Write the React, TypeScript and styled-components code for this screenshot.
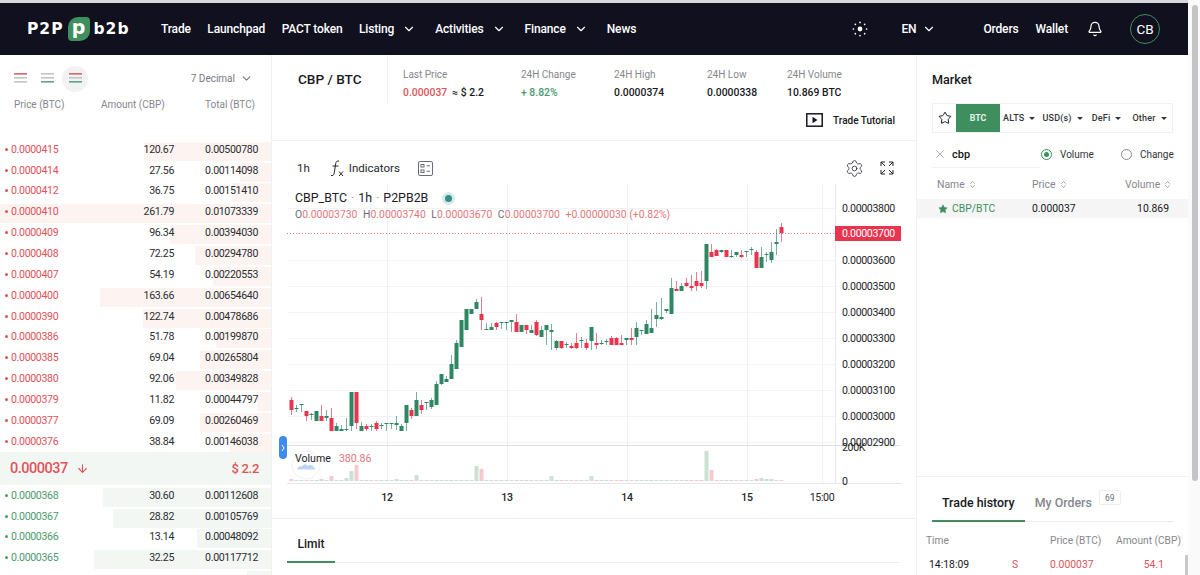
import React from 'react';
import styled, { createGlobalStyle } from 'styled-components';
import { ArrowDown, Bell, ChevronDown, ChevronsUpDown, Settings, Star, X } from 'lucide-react';

const RED = '#e0535a';
const GREEN = '#4c9a70';
const BRAND = '#3f8f5e';
const LINE = '#f1f1f3';

const GlobalStyle = createGlobalStyle`
  html, body { margin: 0; padding: 0; background: #fff; overflow: hidden; }
  body { font-family: Roboto, "Liberation Sans", sans-serif; color: #17181c; }
  * { box-sizing: border-box; }
`;

const Page = styled.div`
  display: flex;
  width: 1200px;
  height: 575px;
  overflow: hidden;
`;

const Main = styled.div`
  width: 1188px;
  border-top: 3px solid #d8d8da;
  display: flex;
  flex-direction: column;
`;

const ScrollTrack = styled.div`
  width: 12px;
  padding: 5px 2px 0 4px;
  background: #fafafa;
`;

const ScrollThumb = styled.div`
  height: 476px;
  border-radius: 3px;
  background: #c4c4c6;
`;

// top bar
const Header = styled.header`
  height: 52px;
  flex: none;
  background: #10101f;
  color: #fff;
  display: flex;
  align-items: center;
  padding-left: 27px;
  font-size: 12px;
  letter-spacing: -0.15px;
  font-weight: 500;
`;

const Logo = styled.div`
  width: 134px;
  display: flex;
  align-items: center;
  font-family: "DejaVu Sans", sans-serif;
  font-weight: 700;
  font-size: 15.5px;
  letter-spacing: 1px;
`;

const LogoMark = styled.span`
  width: 22px;
  height: 24px;
  margin: 0 4px 0 4px;
  border-radius: 10px 4px 10px 4px;
  background: ${BRAND};
  color: #fff;
  display: flex;
  align-items: center;
  justify-content: center;
  font-size: 19px;
  letter-spacing: 0;
  line-height: 1;
  padding-bottom: 3px;
`;

const Nav = styled.nav`
  display: flex;
  align-items: center;
  gap: 16.5px;
  flex: 1;
`;

const NavItem = styled.span`
  display: flex;
  align-items: center;
  gap: 8px;
  white-space: nowrap;
  padding-right: ${p => (p.$caret ? 2.5 : 0)}px;
`;

const HeaderRight = styled.div`
  display: flex;
  align-items: center;
  padding-right: 28px;
`;

const Lang = styled.span`
  display: flex;
  align-items: center;
  gap: 6px;
  margin: 0 47px 0 33px;
`;

const HeaderLink = styled.span`
  margin-right: 17px;
`;

const BellWrap = styled.span`
  display: flex;
  margin: 0 27px 0 2px;
`;

const Avatar = styled.span`
  width: 30px;
  height: 30px;
  border-radius: 50%;
  border: 1.5px solid ${BRAND};
  display: flex;
  align-items: center;
  justify-content: center;
  font-size: 13.5px;
  font-weight: 400;
`;

const Columns = styled.div`
  flex: 1;
  min-height: 0;
  display: grid;
  grid-template-columns: 272px 645px 271px;
`;

// order book
const Book = styled.section`
  border-right: 1px solid ${LINE};
  overflow: hidden;
`;

const BookTop = styled.div`
  height: 86.7px;
  position: relative;
`;

const BookControls = styled.div`
  height: 37px;
  padding: 10px 18px 0 14px;
  display: flex;
  align-items: center;
`;

const ModeIcon = styled.span`
  width: 26px;
  height: 26px;
  margin-right: ${p => (p.$last ? 0 : 1.5)}px;
  margin-left: ${p => (p.$first ? -7 : 0)}px;
  border-radius: 50%;
  background: ${p => (p.$active ? '#f2f2f4' : 'transparent')};
  display: flex;
  align-items: center;
  justify-content: center;
`;

const Decimal = styled.span`
  margin-left: auto;
  display: flex;
  align-items: center;
  gap: 5px;
  font-size: 10px;
  color: #77797f;
`;

const BookHead = styled.div`
  display: grid;
  grid-template-columns: 87px 104px auto;
  padding: 7px 0 0 14px;
  font-size: 10px;
  color: #85878d;
`;

const BookList = styled.div`
  display: flex;
  flex-direction: column;
  gap: 1.87px;
`;

const Row = styled.div`
  position: relative;
  height: 19px;
  display: grid;
  grid-template-columns: 70px 99px 84px;
  padding-left: 5px;
  font-size: 10.6px;
  letter-spacing: -0.35px;
  line-height: 15px;
`;

const Depth = styled.div`
  position: absolute;
  top: 0;
  right: 0;
  bottom: 0;
  background: ${p => (p.$side === 'sell' ? '#fdf4f2' : '#f2f7f4')};
`;

const Price = styled.span`
  position: relative;
  height: 15px;
  color: ${p => (p.$side === 'sell' ? RED : GREEN)};
  display: flex;
  align-items: center;
  gap: 3px;
  &::before {
    content: '';
    width: 3px;
    height: 3px;
    border-radius: 50%;
    background: currentColor;
  }
`;

const Num = styled.span`
  position: relative;
  text-align: right;
  color: #2c2d31;
`;

const MidBand = styled.div`
  height: 33px;
  margin: -1px 0 3px;
  background: #f3f7f4;
  display: flex;
  align-items: center;
  padding: 0 12px 0 10px;
  color: ${RED};
  font-weight: 500;
`;

const MidPrice = styled.span`
  font-size: 14.5px;
  letter-spacing: -0.5px;
  margin-right: 8px;
`;

const MidUsd = styled.span`
  margin-left: auto;
  font-size: 13px;
  letter-spacing: -0.3px;
`;

// center column
const Center = styled.section`
  border-right: 1px solid ${LINE};
  display: flex;
  flex-direction: column;
  min-width: 0;
`;

const Stats = styled.div`
  height: 48px;
  flex: none;
  display: flex;
`;

const Pair = styled.div`
  width: 116px;
  border-right: 1px solid ${LINE};
  padding: 16px 0 0 26px;
  font-size: 13.6px;
  font-weight: 500;
`;

const StatGrid = styled.div`
  display: grid;
  grid-template-columns: 118px 93px 93px 80px 1fr;
  padding: 13px 0 0 15px;
  flex: 1;
`;

const StatLabel = styled.div`
  font-size: 10px;
  line-height: 14px;
  color: #85878d;
`;

const StatValue = styled.div`
  margin-top: 4px;
  font-size: 10.4px;
  line-height: 14px;
  font-weight: 500;
  color: ${p => p.$color || '#17181c'};
`;

const Approx = styled.span`
  color: #17181c;
  margin-left: 5px;
`;

const TutorialRow = styled.div`
  height: 38px;
  flex: none;
  border-bottom: 1px solid ${LINE};
  display: flex;
  align-items: center;
  justify-content: flex-end;
  gap: 10px;
  padding: 0 21px 3px 0;
  font-size: 10px;
  font-weight: 500;
`;

const ChartTools = styled.div`
  height: 43px;
  flex: none;
  display: flex;
  align-items: center;
  padding: 11px 22px 0 25px;
  font-size: 11.5px;
  color: #24262b;
`;

const ToolGroup = styled.span`
  display: flex;
  align-items: center;
  margin-left: ${p => p.$left}px;
  gap: ${p => p.$gap || 0}px;
`;

const ToolsRight = styled.span`
  margin-left: auto;
  display: flex;
  align-items: center;
  gap: 16px;
`;

const ChartWrap = styled.div`
  position: relative;
  height: 335px;
  flex: none;
  border-bottom: 1px solid ${LINE};
`;

const ChartSvg = styled.svg`
  display: block;
  font-family: Roboto, "Liberation Sans", sans-serif;
`;

const Legend = styled.div`
  position: absolute;
  left: 23px;
  top: 6px;
`;

const LegendTitle = styled.div`
  display: flex;
  align-items: center;
  font-size: 12.4px;
  line-height: 16px;
  color: #1e2026;
`;

const Sep = styled.span`
  margin: 0 4px;
  color: #9a9ca2;
`;

const LiveDot = styled.span`
  width: 13px;
  height: 13px;
  margin-left: 14px;
  border-radius: 50%;
  border: 3.5px solid #d4ebe7;
  background: #3a8e85;
`;

const Ohlc = styled.div`
  display: flex;
  gap: 5.6px;
  margin-top: 2px;
  font-size: 10.4px;
  line-height: 14px;
  color: #e2777a;
  white-space: nowrap;
`;

const OhlcKey = styled.span`
  color: #6a6d78;
`;

const VolumeLabel = styled.div`
  position: absolute;
  left: 23px;
  top: 268px;
  display: flex;
  gap: 8px;
  font-size: 10.6px;
  line-height: 14px;
  color: #1e2026;
`;

const VolumeValue = styled.span`
  color: #e2777a;
`;

const PaneHandle = styled.div`
  position: absolute;
  left: 7px;
  top: 252px;
  width: 8px;
  height: 23px;
  border-radius: 4px;
  background: #3f8cec;
  color: #fff;
  display: flex;
  align-items: center;
  justify-content: center;
`;

const OrderTabs = styled.div`
  margin: 0 16px 0 15px;
  height: 44px;
  border-bottom: 1px solid #ececee;
`;

const LimitTab = styled.div`
  width: 48px;
  height: 44px;
  padding-top: 17px;
  text-align: center;
  font-size: 12px;
  line-height: 16px;
  font-weight: 500;
  border-bottom: 2px solid ${BRAND};
`;

// market column
const Market = styled.section`
  display: flex;
  flex-direction: column;
  min-height: 0;
  overflow: hidden;
`;

const MarketTitle = styled.div`
  padding: 16px 0 0 15px;
  height: 48px;
  font-size: 12.6px;
  line-height: 18px;
  font-weight: 500;
  flex: none;
`;

const Tabs = styled.div`
  margin: 0 15px 0 15px;
  height: 30px;
  flex: none;
  border: 1px solid #f0f0f2;
  display: flex;
  align-items: center;
`;

const FavTab = styled.span`
  width: 23px;
  display: flex;
  justify-content: center;
`;

const BtcTab = styled.span`
  width: 44px;
  height: 28px;
  background: ${BRAND};
  color: #e8f3ec;
  display: flex;
  align-items: center;
  justify-content: center;
  font-size: 8.8px;
  font-weight: 700;
`;

const DropTab = styled.span`
  display: flex;
  align-items: center;
  gap: 5px;
  margin-left: ${p => p.$left}px;
  font-size: 9px;
  font-weight: 500;
  letter-spacing: 0.2px;
  color: #33353a;
  &::after {
    content: '';
    border-left: 3px solid transparent;
    border-right: 3px solid transparent;
    border-top: 3.5px solid #33353a;
  }
`;

const SearchRow = styled.div`
  height: 34px;
  flex: none;
  display: flex;
  align-items: center;
  padding: 9px 0 0 0;
`;

const SearchBox = styled.div`
  width: 109px;
  margin-left: 15px;
  height: 26px;
  display: flex;
  align-items: center;
  gap: 5px;
  padding-left: 1px;
  border-bottom: 1px solid #f0f0f2;
  font-size: 11px;
  font-weight: 500;
`;

const RadioLabel = styled.span`
  display: flex;
  align-items: center;
  gap: 8px;
  margin-left: ${p => p.$left}px;
  font-size: 10px;
  color: #33353a;
`;

const Radio = styled.span`
  width: 11px;
  height: 11px;
  border-radius: 50%;
  border: 1px solid ${p => (p.$on ? BRAND : '#8a8c92')};
  display: flex;
  align-items: center;
  justify-content: center;
  &::after {
    content: '';
    width: 5px;
    height: 5px;
    border-radius: 50%;
    background: ${p => (p.$on ? BRAND : 'transparent')};
  }
`;

const MarketHead = styled.div`
  margin-top: 10px;
  height: 15px;
  flex: none;
  display: grid;
  grid-template-columns: 95px 93px 1fr;
  padding: 0 20px;
  font-size: 10.4px;
  line-height: 15px;
  color: #85878d;
`;

const HeadCell = styled.span`
  display: flex;
  align-items: center;
  gap: 3px;
  justify-content: ${p => (p.$end ? 'flex-end' : 'flex-start')};
`;

const MarketRow = styled.div`
  margin-top: 7px;
  height: 19px;
  flex: none;
  background: #f5f5f6;
  display: grid;
  grid-template-columns: 94px 72px 1fr;
  align-items: center;
  padding: 0 19px 0 21px;
  font-size: 10.4px;
`;

const MarketPair = styled.span`
  display: flex;
  align-items: center;
  gap: 4px;
  color: ${BRAND};
`;

const RowRight = styled.span`
  text-align: right;
`;

const History = styled.div`
  margin-top: 258px;
  flex: 1;
  border-top: 1px solid ${LINE};
  position: relative;
`;

const HistoryTabs = styled.div`
  margin: 0 14px 0 15px;
  height: 45px;
  border-bottom: 1px solid #ececee;
  display: flex;
  align-items: flex-end;
`;

const HistoryTab = styled.span`
  height: 45px;
  padding: 18px 10px 0;
  font-size: 12.4px;
  line-height: 16px;
  font-weight: 500;
  color: ${p => (p.$active ? '#17181c' : '#85878d')};
  border-bottom: 2px solid ${p => (p.$active ? BRAND : 'transparent')};
  margin-bottom: -1px;
  white-space: nowrap;
`;

const CountBadge = styled.span`
  margin: 0 0 16px -3px;
  width: 22px;
  height: 15px;
  border: 1px solid #ededef;
  border-radius: 2px;
  display: flex;
  align-items: center;
  justify-content: center;
  font-size: 8.5px;
  color: #6a6d78;
`;

const TradeHead = styled.div`
  display: grid;
  grid-template-columns: 124px 66px auto;
  margin-top: 12px;
  padding-left: 9px;
  font-size: 10.2px;
  line-height: 14px;
  color: #85878d;
  white-space: nowrap;
`;

const TradeRow = styled.div`
  display: grid;
  grid-template-columns: 83px 38px 41px 73px;
  margin-top: 10px;
  padding-left: 12px;
  font-size: 10.4px;
  line-height: 14px;
  color: ${RED};
`;

const TradeTime = styled.span`
  color: #17181c;
`;

const TradeAmount = styled.span`
  text-align: right;
`;

const TradeScroll = styled.div`
  position: absolute;
  right: 0;
  top: 78px;
  width: 3px;
  height: 30px;
  background: #c9c9cb;
`;

const sells: [string, string, string, number][] = [
  ['0.0000415', '120.67', '0.00500780', 127],
  ['0.0000414', '27.56', '0.00114098', 31],
  ['0.0000412', '36.75', '0.00151410', 39],
  ['0.0000410', '261.79', '0.01073339', 272],
  ['0.0000409', '96.34', '0.00394030', 101],
  ['0.0000408', '72.25', '0.00294780', 76],
  ['0.0000407', '54.19', '0.00220553', 58],
  ['0.0000400', '163.66', '0.00654640', 171],
  ['0.0000390', '122.74', '0.00478686', 128],
  ['0.0000386', '51.78', '0.00199870', 55],
  ['0.0000385', '69.04', '0.00265804', 71],
  ['0.0000380', '92.06', '0.00349828', 95],
  ['0.0000379', '11.82', '0.00044797', 14],
  ['0.0000377', '69.09', '0.00260469', 71],
  ['0.0000376', '38.84', '0.00146038', 41],
];

const buys: [string, string, string, number][] = [
  ['0.0000368', '30.60', '0.00112608', 168],
  ['0.0000367', '28.82', '0.00105769', 158],
  ['0.0000366', '13.14', '0.00048092', 74],
  ['0.0000365', '32.25', '0.00117712', 177],
  ['', '', '', 24],
];

// x, body top, body bottom, wick top, wick bottom, rising (page pixels)
const candles: [number, number, number, number, number, boolean][] = [
  [291, 400, 410, 397, 415, false], [296, 408, 409, 405, 412, true], [301, 404, 405, 404, 412, true],
  [306, 411, 416, 411, 421, false], [311, 414, 415, 413, 420, true], [316, 411, 421, 411, 421, true],
  [321, 416, 421, 405, 421, false], [326, 416, 418, 410, 421, true], [331, 418, 431, 408, 431, false],
  [336, 426, 431, 423, 431, true], [341, 429, 431, 425, 431, true], [346, 429, 430, 418, 431, true],
  [351, 392, 426, 392, 431, true], [356, 392, 423, 392, 429, false], [361, 426, 431, 422, 431, true],
  [366, 426, 429, 424, 431, false], [371, 426, 427, 424, 431, true], [376, 423, 429, 421, 431, false],
  [381, 425, 426, 423, 429, true], [386, 423, 424, 423, 431, true], [391, 423, 424, 423, 429, true],
  [396, 423, 425, 416, 430, true], [401, 426, 431, 424, 431, true], [406, 405, 423, 405, 431, true],
  [411, 410, 416, 408, 419, false], [416, 400, 416, 392, 416, true], [421, 405, 410, 400, 414, false],
  [426, 402, 403, 402, 410, true], [431, 400, 407, 398, 409, true], [436, 384, 405, 381, 405, true],
  [441, 374, 384, 374, 385, true], [446, 379, 382, 376, 382, true], [451, 364, 379, 355, 379, true],
  [456, 343, 369, 340, 369, true], [461, 320, 347, 320, 347, true], [466, 309, 330, 309, 330, true],
  [471, 309, 314, 309, 314, true], [476, 302, 309, 299, 309, true], [481, 314, 320, 297, 330, false],
  [486, 329, 330, 323, 330, true], [491, 327, 330, 323, 330, true], [496, 323, 327, 322, 330, false],
  [501, 322, 323, 322, 329, true], [506, 322, 323, 322, 330, true], [511, 320, 322, 320, 332, true],
  [516, 322, 332, 314, 332, false], [521, 325, 332, 325, 332, true], [526, 325, 330, 325, 334, false],
  [531, 330, 333, 325, 333, true], [536, 322, 335, 320, 336, false], [541, 330, 337, 326, 337, true],
  [546, 325, 330, 325, 345, true], [551, 330, 332, 324, 350, true], [556, 341, 348, 340, 350, true],
  [561, 341, 348, 341, 349, false], [566, 344, 345, 342, 348, true], [571, 346, 348, 343, 349, false],
  [576, 343, 348, 333, 349, false], [581, 340, 341, 337, 348, true], [586, 343, 348, 339, 350, false],
  [591, 327, 341, 327, 350, true], [596, 343, 345, 333, 349, false], [601, 343, 344, 340, 345, true],
  [606, 341, 342, 339, 345, true], [611, 338, 345, 336, 345, false], [616, 338, 345, 337, 345, false],
  [621, 343, 345, 335, 345, false], [626, 338, 340, 338, 345, true], [631, 338, 340, 328, 345, false],
  [636, 328, 337, 322, 345, true], [641, 330, 331, 330, 335, true], [646, 324, 334, 320, 334, true],
  [651, 328, 333, 309, 333, true], [656, 315, 319, 302, 327, true], [661, 317, 319, 298, 320, true],
  [666, 309, 311, 309, 313, true], [671, 288, 314, 278, 314, true], [676, 289, 291, 281, 291, false],
  [681, 286, 291, 283, 291, true], [686, 283, 286, 278, 287, false], [691, 286, 288, 275, 291, false],
  [696, 281, 286, 272, 291, false], [701, 283, 286, 271, 288, false], [706, 244, 281, 244, 289, true],
  [711, 252, 257, 244, 257, false], [716, 250, 256, 249, 256, false], [721, 250, 252, 250, 253, true],
  [726, 250, 257, 250, 257, false], [731, 256, 257, 250, 258, true], [736, 252, 255, 252, 257, true],
  [741, 255, 257, 250, 258, false], [746, 251, 252, 251, 257, true], [751, 249, 250, 247, 255, true],
  [756, 252, 268, 250, 268, false], [761, 257, 268, 247, 268, true], [766, 254, 255, 252, 262, true],
  [771, 252, 260, 242, 263, true], [776, 242, 244, 229, 255, true], [781, 227, 233, 223, 242, false],
];

const volumes: Record<number, number> = {
  291: 2, 321: 2, 331: 5, 346: 3, 351: 10, 356: 16, 396: 2, 416: 6, 476: 15, 481: 12, 551: 5, 591: 5, 706: 30, 711: 11,
  756: 2, 761: 3, 766: 2, 771: 2,
};

const priceTicks = [
  [208, '0.00003800'], [260, '0.00003600'], [286, '0.00003500'], [312, '0.00003400'],
  [338, '0.00003300'], [364, '0.00003200'], [390, '0.00003100'], [416, '0.00003000'], [442, '0.00002900'],
] as const;

const timeTicks = [[387, '12'], [507, '13'], [627, '14'], [747, '15'], [822, '15:00']] as const;

const Candles = () => (
  <ChartSvg width={644} height={335} viewBox="272 184 644 335">
    {priceTicks.map(([y]) => (
      <line key={y} x1={287} x2={835} y1={y + 0.5} y2={y + 0.5} stroke="#f2f3f8" />
    ))}
    {timeTicks.map(([x]) => (
      <line key={x} x1={x + 0.5} x2={x + 0.5} y1={184} y2={483} stroke="#f0f1f6" />
    ))}
    <line x1={835.5} x2={835.5} y1={184} y2={483} stroke="#e8e9f0" />
    <line x1={287} x2={900} y1={445.5} y2={445.5} stroke="#dfe0ea" />
    <line x1={287} x2={902} y1={483.5} y2={483.5} stroke="#e6e7ee" />
    {candles.map(([x, , , , , up]) => {
      const h = volumes[x] || 1;
      return <rect key={x} x={x - 1.5} y={481 - h} width={4} height={h} fill={up ? '#c9e2d4' : '#f5c9cf'} />;
    })}
    <circle cx={306} cy={465} r={14} fill="none" stroke="#f1f1f3" />
    <path d="M297 469.500c1-3 3-4.500 5-3 1.500-3 4-3 5.500-.5 1.500-1.500 5-1.500 6 1 1 .7 2 1.500 2.500 2.500z" fill="#bcd5f3" />
    <line x1={287} x2={835} y1={233.5} y2={233.5} stroke="#ec6f80" strokeDasharray="1 2" />
    {candles.map(([x, top, bottom, wt, wb, up]) => {
      const c = up ? '#2f8662' : '#e8344e';
      return (
        <g key={x}>
          <line x1={x + 0.5} x2={x + 0.5} y1={wt} y2={wb} stroke={c} strokeOpacity={0.65} />
          <rect x={x - 1.5} y={top} width={4} height={bottom - top} fill={c} />
        </g>
      );
    })}
    <g fontSize={10.6} letterSpacing={-0.35} fill="#24262b">
      {priceTicks.map(([y, label]) => (
        <text key={label} x={842} y={y + 4}>{label}</text>
      ))}
      <text x={842} y={451}>200K</text>
      <text x={842} y={485}>0</text>
      {timeTicks.map(([x, label]) => (
        <text key={label} x={x} y={501} textAnchor="middle" fontWeight={x === 822 ? 400 : 500}>{label}</text>
      ))}
    </g>
    <rect x={835} y={226} width={66} height={15} fill="#e8344e" />
    <text x={842} y={237} fontSize={10.6} letterSpacing={-0.35} fill="#fff">0.00003700</text>
  </ChartSvg>
);

const ModeLines = ({ colors }: { colors: string[] }) => (
  <svg width={13} height={11} viewBox="0 0 13 11">
    {colors.map((c, i) => (
      <rect key={i} x={0} y={i * 4} width={13} height={1.6} fill={c} />
    ))}
  </svg>
);

const Spark = () => (
  <svg width={16} height={16} viewBox="0 0 16 16" fill="#fff">
    <circle cx={8} cy={8} r={2.4} />
    {[0, 45, 90, 135, 180, 225, 270, 315].map(a => (
      <circle
        key={a}
        cx={8 + 6.6 * Math.cos((a * Math.PI) / 180)}
        cy={8 + 6.6 * Math.sin((a * Math.PI) / 180)}
        r={0.85}
      />
    ))}
  </svg>
);

const PlayBox = () => (
  <svg width={17} height={14} viewBox="0 0 17 14">
    <rect x={0.8} y={0.8} width={15.4} height={12.4} fill="none" stroke="#17181c" strokeWidth={1.5} />
    <path d="M6.500 3.800v6.400l5-3.200z" fill="#17181c" />
  </svg>
);

const FxIcon = () => (
  <svg width={14} height={17} viewBox="0 0 14 17" fill="none" stroke="#24262b" strokeWidth={1}>
    <path d="M9 1.200C7 .6 6 1.600 5.700 3.500L4.300 12.800C4 15 2.800 16 1 15.500" />
    <path d="M2.500 6h6" />
    <path d="M9 11.500l4 4.500M13 11.500l-4 4.500" />
  </svg>
);

const TemplatesIcon = () => (
  <svg width={15} height={15} viewBox="0 0 15 15" fill="none" stroke="#6a6d78" strokeWidth={1}>
    <rect x={0.5} y={0.5} width={14} height={14} rx={1.5} />
    <rect x={3} y={3.500} width={3} height={2.500} />
    <rect x={3} y={9} width={3} height={2.500} />
    <path d="M8.500 4.800h3.500M8.500 10.200h3.500" />
  </svg>
);

const FullscreenIcon = () => (
  <svg width={14} height={14} viewBox="0 0 14 14" fill="none" stroke="#24262b" strokeWidth={1}>
    <path d="M1 5V1h4M1 1l4 4M13 5V1H9M13 1L9 5M1 9v4h4M1 13l4-4M13 9v4H9M13 13L9 9" />
  </svg>
);

const HandleChevron = () => (
  <svg width={4} height={8} viewBox="0 0 4 8" fill="none" stroke="#fff" strokeWidth={1}>
    <path d="M1 1l2 3-2 3" />
  </svg>
);

const renderRow = (side: 'sell' | 'buy') => ([price, amount, total, depth]: [string, string, string, number]) => (
  <Row key={price || 'clipped'}>
    <Depth $side={side} style={{ width: depth }} />
    {price && <Price $side={side}>{price}</Price>}
    <Num>{amount}</Num>
    <Num>{total}</Num>
  </Row>
);

const App: React.FC = () => (
  <Page>
    <GlobalStyle />
    <Main>
      <Header>
        <Logo>
          P2P<LogoMark>p</LogoMark>b2b
        </Logo>
        <Nav>
          <NavItem>Trade</NavItem>
          <NavItem>Launchpad</NavItem>
          <NavItem>PACT token</NavItem>
          <NavItem $caret>Listing <ChevronDown size={14} /></NavItem>
          <NavItem $caret>Activities <ChevronDown size={14} /></NavItem>
          <NavItem $caret>Finance <ChevronDown size={14} /></NavItem>
          <NavItem>News</NavItem>
        </Nav>
        <HeaderRight>
          <Spark />
          <Lang>EN <ChevronDown size={14} /></Lang>
          <HeaderLink>Orders</HeaderLink>
          <HeaderLink>Wallet</HeaderLink>
          <BellWrap><Bell size={16} strokeWidth={1.8} /></BellWrap>
          <Avatar>CB</Avatar>
        </HeaderRight>
      </Header>
      <Columns>
        <Book>
          <BookTop>
            <BookControls>
              <ModeIcon $first><ModeLines colors={['#d9646a', '#c4c4c6', '#c4c4c6']} /></ModeIcon>
              <ModeIcon><ModeLines colors={['#c4c4c6', '#c4c4c6', '#5fa384']} /></ModeIcon>
              <ModeIcon $active $last><ModeLines colors={['#d9646a', '#c4c4c6', '#5fa384']} /></ModeIcon>
              <Decimal>7 Decimal <ChevronDown size={13} /></Decimal>
            </BookControls>
            <BookHead>
              <span>Price (BTC)</span>
              <span>Amount (CBP)</span>
              <span>Total (BTC)</span>
            </BookHead>
          </BookTop>
          <BookList>{sells.map(renderRow('sell'))}</BookList>
          <MidBand>
            <MidPrice>0.000037</MidPrice>
            <ArrowDown size={13} />
            <MidUsd>$ 2.2</MidUsd>
          </MidBand>
          <BookList>{buys.map(renderRow('buy'))}</BookList>
        </Book>

        <Center>
          <Stats>
            <Pair>CBP / BTC</Pair>
            <StatGrid>
              <div>
                <StatLabel>Last Price</StatLabel>
                <StatValue $color={RED}>0.000037<Approx>≈ $ 2.2</Approx></StatValue>
              </div>
              <div>
                <StatLabel>24H Change</StatLabel>
                <StatValue $color={GREEN}>+ 8.82%</StatValue>
              </div>
              <div>
                <StatLabel>24H High</StatLabel>
                <StatValue>0.0000374</StatValue>
              </div>
              <div>
                <StatLabel>24H Low</StatLabel>
                <StatValue>0.0000338</StatValue>
              </div>
              <div>
                <StatLabel>24H Volume</StatLabel>
                <StatValue>10.869 BTC</StatValue>
              </div>
            </StatGrid>
          </Stats>
          <TutorialRow>
            <PlayBox />
            Trade Tutorial
          </TutorialRow>
          <ChartTools>
            1h
            <ToolGroup $left={20} $gap={5}><FxIcon /> Indicators</ToolGroup>
            <ToolGroup $left={18}><TemplatesIcon /></ToolGroup>
            <ToolsRight>
              <Settings size={19} strokeWidth={1} />
              <FullscreenIcon />
            </ToolsRight>
          </ChartTools>
          <ChartWrap>
            <Candles />
            <Legend>
              <LegendTitle>
                CBP_BTC<Sep>·</Sep>1h<Sep>·</Sep>P2PB2B<LiveDot />
              </LegendTitle>
              <Ohlc>
                <span><OhlcKey>O</OhlcKey>0.00003730</span>
                <span><OhlcKey>H</OhlcKey>0.00003740</span>
                <span><OhlcKey>L</OhlcKey>0.00003670</span>
                <span><OhlcKey>C</OhlcKey>0.00003700</span>
                <span>+0.00000030 (+0.82%)</span>
              </Ohlc>
            </Legend>
            <VolumeLabel>
              Volume <VolumeValue>380.86</VolumeValue>
            </VolumeLabel>
            <PaneHandle><HandleChevron /></PaneHandle>
          </ChartWrap>
          <OrderTabs>
            <LimitTab>Limit</LimitTab>
          </OrderTabs>
        </Center>

        <Market>
          <MarketTitle>Market</MarketTitle>
          <Tabs>
            <FavTab><Star size={14} strokeWidth={1.7} /></FavTab>
            <BtcTab>BTC</BtcTab>
            <DropTab $left={3}>ALTS</DropTab>
            <DropTab $left={7}>USD(s)</DropTab>
            <DropTab $left={9}>DeFi</DropTab>
            <DropTab $left={11}>Other</DropTab>
          </Tabs>
          <SearchRow>
            <SearchBox>
              <X size={14} strokeWidth={1} color="#77797f" />
              cbp
            </SearchBox>
            <RadioLabel $left={0}><Radio $on />Volume</RadioLabel>
            <RadioLabel $left={27}><Radio />Change</RadioLabel>
          </SearchRow>
          <MarketHead>
            <HeadCell>Name <ChevronsUpDown size={9} /></HeadCell>
            <HeadCell>Price <ChevronsUpDown size={9} /></HeadCell>
            <HeadCell $end>Volume <ChevronsUpDown size={9} /></HeadCell>
          </MarketHead>
          <MarketRow>
            <MarketPair><Star size={10} fill={BRAND} strokeWidth={1} />CBP/BTC</MarketPair>
            <span>0.000037</span>
            <RowRight>10.869</RowRight>
          </MarketRow>
          <History>
            <HistoryTabs>
              <HistoryTab $active>Trade history</HistoryTab>
              <HistoryTab>My Orders</HistoryTab>
              <CountBadge>69</CountBadge>
            </HistoryTabs>
            <TradeHead>
              <span>Time</span>
              <span>Price (BTC)</span>
              <span>Amount (CBP)</span>
            </TradeHead>
            <TradeRow>
              <TradeTime>14:18:09</TradeTime>
              <span>S</span>
              <span>0.000037</span>
              <TradeAmount>54.1</TradeAmount>
            </TradeRow>
            <TradeScroll />
          </History>
        </Market>
      </Columns>
    </Main>
    <ScrollTrack>
      <ScrollThumb />
    </ScrollTrack>
  </Page>
);

export default App;
